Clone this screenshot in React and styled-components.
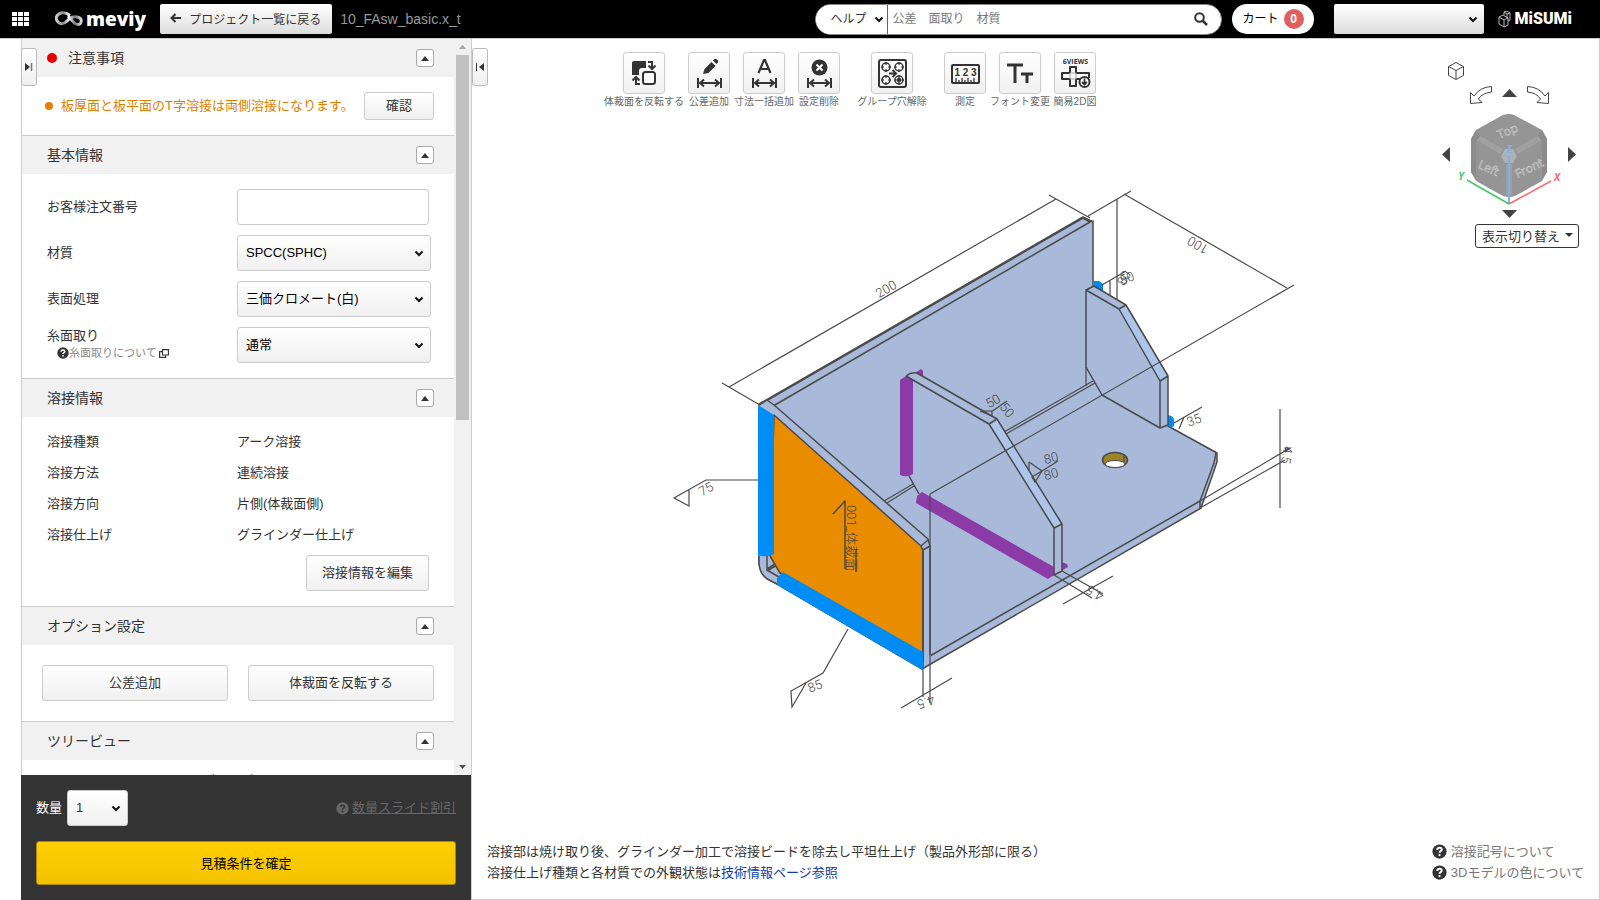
import styled, { createGlobalStyle, css } from 'styled-components';

const GlobalStyle = createGlobalStyle`
  * {
    box-sizing: border-box;
  }

  body {
    margin: 0;
    background: #fff;
    color: #333;
    font-family: 'Liberation Sans', 'Noto Sans CJK JP', sans-serif;
    font-size: 13px;
    line-height: 20px;
  }

  button,
  input,
  select {
    font-family: inherit;
    font-size: 13px;
    color: #333;
  }

  button {
    cursor: pointer;
  }

  a {
    color: inherit;
    text-decoration: none;
  }

  svg {
    display: block;
  }
`;

const raised = css`
  border: 1px solid #ccc;
  border-radius: 3px;
  background: linear-gradient(#fff, #f0f0f0);
`;

const chevron = `url("data:image/svg+xml,%3Csvg xmlns='http://www.w3.org/2000/svg' width='10' height='7'%3E%3Cpath d='M1.500 1.500L5 5l3.500-3.500' fill='none' stroke='%23111' stroke-width='2'/%3E%3C/svg%3E")`;

const Select = styled.select`
  appearance: none;
  height: 36px;
  padding: 0 20px 0 8px;
  border: 1px solid #ccc;
  border-radius: 3px;
  background: ${chevron} no-repeat right 6px center, linear-gradient(#fff, #f0f0f0);
`;

const Page = styled.div`
  display: flex;
  flex-direction: column;
  height: 100vh;
  overflow: hidden;
`;

/* header */

const TopBar = styled.header`
  display: flex;
  align-items: center;
  flex: none;
  height: 39px;
  padding: 0 28px 0 12px;
  background: #000;
  border-bottom: 1px solid #ccc;
  font-size: 12px;
`;

const IconButton = styled.button`
  display: block;
  padding: 0;
  border: 0;
  background: none;
`;

const Brand = styled.a`
  display: flex;
  align-items: center;
  gap: 3px;
  margin: 0 14px 0 26px;
  color: #fff;
  font: 800 19px/28px 'Open Sans', sans-serif;
`;

const BackButton = styled.button`
  display: flex;
  align-items: center;
  gap: 8px;
  height: 30px;
  padding: 0 11px 2px 10px;
  border: 0;
  border-radius: 2px;
  background: linear-gradient(#fff, #ddd);
  font-size: 12px;
  white-space: nowrap;
`;

const FileName = styled.span`
  margin-left: 8px;
  color: #999;
  font-size: 14px;
`;

const Search = styled.form`
  display: flex;
  align-items: center;
  width: 407px;
  height: 31px;
  margin-left: auto;
  padding-right: 13px;
  border: 1px solid #888;
  border-radius: 16px;
  background: #fff;
  overflow: hidden;

  input {
    flex: 1;
    min-width: 0;
    padding: 0 4px;
    border: 0;
    outline: 0;
    font-size: 12px;
  }

  input::placeholder {
    color: #777;
  }
`;

const ScopeSelect = styled(Select)`
  width: 72px;
  height: 31px;
  padding: 0 0 0 14px;
  border-width: 0 1px 0 0;
  border-color: #666;
  border-radius: 0;
  background: ${chevron} no-repeat right 3px center #fff;
  font-size: 12px;
`;

const Cart = styled.a`
  display: flex;
  align-items: center;
  gap: 5px;
  height: 30px;
  margin: 0 20px 0 10px;
  padding: 0 10px;
  border-radius: 15px;
  background: #fff;
  color: #000;
`;

const Badge = styled.span`
  width: 20px;
  height: 20px;
  border-radius: 10px;
  background: #e06060;
  color: #fff;
  font-weight: bold;
  text-align: center;
`;

const AccountSelect = styled(Select)`
  width: 150px;
  height: 30px;
  border: 0;
  border-radius: 2px;
  background: ${chevron} no-repeat right 6px center, linear-gradient(#fff, #ddd);
`;

const Misumi = styled.a`
  display: flex;
  align-items: center;
  gap: 4px;
  margin-left: 14px;
  color: #fff;
  font: 900 16px/28px Roboto, sans-serif;
`;

/* side panel */

const Body = styled.div`
  display: flex;
  flex: 1;
  min-height: 0;
  padding-left: 21px;
`;

const Side = styled.aside`
  position: relative;
  display: flex;
  flex-direction: column;
  flex: none;
  width: 451px;
  border-right: 1px solid #ccc;
`;

const PanelTab = styled.button`
  position: absolute;
  top: 9px;
  left: ${(props) => (props.$outside ? '451px' : '0')};
  z-index: 2;
  width: 16px;
  height: 38px;
  padding: 0;
  display: grid;
  place-items: center;
  ${raised}
  border-color: #bbb;
`;

const Scroll = styled.div`
  display: flex;
  flex: 1;
  min-height: 0;
`;

const Sections = styled.div`
  flex: 1;
  min-width: 0;
  overflow: hidden;
  border-left: 1px solid #ccc;
`;

const ScrollTrack = styled.div`
  display: flex;
  flex-direction: column;
  align-items: center;
  width: 17px;
  padding-right: 1px;
  background: #f1f1f1;

  svg {
    flex: none;
    margin: 6px 0;
  }
`;

const ScrollThumb = styled.div`
  width: 13px;
  height: 365px;
  margin-bottom: auto;
  background: #c1c1c1;
`;

const Section = styled.section`
  & + & {
    border-top: 1px solid #ccc;
  }
`;

const SectionHead = styled.div`
  display: flex;
  align-items: center;
  height: 38px;
  padding: 0 20px 0 25px;
  background: #f1f1f1;

  h2 {
    display: flex;
    align-items: center;
    gap: 11px;
    flex: 1;
    margin: 0;
    font-size: 14px;
    font-weight: normal;
  }
`;

const Dot = styled.i`
  flex: none;
  width: ${(props) => props.$size}px;
  height: ${(props) => props.$size}px;
  border-radius: 50%;
  background: ${(props) => props.$color};
`;

const FoldButton = styled.button`
  display: grid;
  place-items: center;
  width: 18px;
  height: 18px;
  padding: 0;
  border: 1px solid #aaa;
  border-radius: 3px;
  background: #fff;
`;

const Button = styled.button`
  height: ${(props) => (props.$small ? '28px' : '36px')};
  padding: 0 15px 3px;
  white-space: nowrap;
  ${raised}
`;

const Notice = styled.div`
  display: flex;
  align-items: center;
  gap: 8px;
  height: 58px;
  padding: 0 20px 0 23px;
  color: #e27f00;

  p {
    flex: 1;
    margin: 0;
    white-space: nowrap;
  }

  button {
    width: 70px;
  }
`;

const Fields = styled.div`
  display: grid;
  gap: 10px;
  padding: 15px 23px 15px 25px;
`;

const Field = styled.div`
  display: grid;
  grid-template-columns: 190px 1fr;
  align-items: center;
  height: 36px;

  input {
    width: 192px;
    height: 36px;
    border: 1px solid #ccc;
    border-radius: 3px;
  }

  select {
    width: 194px;
    padding-bottom: 2px;
    color: #000;
  }
`;

const HelpedLabel = styled.div`
  align-self: start;

  label {
    display: block;
    line-height: 18px;
  }
`;

const FieldHelp = styled.a`
  display: flex;
  align-items: center;
  padding-left: 10px;
  color: #888;
  font-size: 11px;
  line-height: 16px;

  svg:last-child {
    margin-left: 2px;
  }
`;

const WeldInfo = styled.div`
  display: flex;
  flex-direction: column;
  align-items: flex-end;
  gap: 5px;
  padding: 9px 25px 15px;

  dl {
    display: grid;
    grid-template-columns: 190px 1fr;
    align-self: stretch;
    margin: 0;
    line-height: 31px;
  }

  dd {
    margin: 0;
  }
`;

const ButtonPair = styled.div`
  display: grid;
  grid-template-columns: 1fr 1fr;
  gap: 20px;
  padding: 20px;
`;

const Tree = styled.div`
  padding: 11px 25px 11px 128px;
`;

const Confirm = styled.div`
  display: grid;
  gap: 15px;
  padding: 15px;
  background: #333;

  > div {
    display: flex;
    align-items: center;
    gap: 5px;
    color: #fff;
  }

  select {
    width: 61px;
    padding-bottom: 2px;
  }
`;

const DiscountLink = styled.a`
  display: flex;
  align-items: center;
  gap: 3px;
  margin-left: auto;
  color: #666;

  span {
    text-decoration: underline;
  }
`;

const ConfirmButton = styled.button`
  height: 44px;
  padding-bottom: 3px;
  border: 1px solid #a88a10;
  border-radius: 3px;
  background: linear-gradient(#ffcf00, #f2c200);
  color: #000;
`;

/* viewer */

const Viewer = styled.main`
  display: grid;
  flex: 1;
  min-width: 0;
  border-right: 1px solid #ccc;
  border-bottom: 1px solid #ccc;

  > * {
    grid-area: 1 / 1;
  }
`;

const Model = styled.svg`
  width: 100%;
  height: 100%;
  min-height: 0;

  .line {
    fill: none;
    stroke: #4a4a4a;
    stroke-width: 1.5;
    stroke-linejoin: round;
  }

  .thin {
    fill: none;
    stroke: #4a4a4a;
    stroke-width: 1.2;
  }

  text {
    fill: #444;
    font-family: Roboto, 'Noto Sans CJK JP', sans-serif;
    font-size: 13px;
    font-weight: 300;
    text-anchor: middle;
    dominant-baseline: central;
  }
`;

const Overlay = styled.div`
  z-index: 1;
  display: flex;
  flex-direction: column;
  justify-content: space-between;
  min-height: 0;
`;

const Row = styled.div`
  display: flex;
  justify-content: space-between;
  align-items: flex-start;
`;

const Toolbar = styled.div`
  display: flex;
  gap: 1px;
  padding: 13px 0 0 145px;
`;

const Tool = styled.label`
  display: flex;
  flex-direction: column;
  align-items: center;
  width: 54px;
  margin-right: ${(props) => props.$gap || 0}px;
  color: #666;
  font-size: 10px;
  line-height: 16px;
  white-space: nowrap;

  button {
    display: grid;
    place-items: center;
    width: 42px;
    height: 42px;
    padding: 0;
    ${raised}
  }
`;

const ViewNav = styled.div`
  display: flex;
  flex-direction: column;
  width: 137px;
  margin: 23px 20px 0 0;
`;

const NavRow = styled.div`
  display: flex;
  align-items: flex-start;
  justify-content: center;
  gap: ${(props) => props.$gap || 0}px;
  width: 134px;
  margin-bottom: ${(props) => props.$after}px;
`;

const CubeButton = styled(IconButton)`
  width: 18px;
  margin: 0 0 5px 5px;
`;

const TurnUp = styled(IconButton)`
  padding-top: 4px;
`;

const TurnSide = styled(IconButton)`
  padding-top: 35px;
`;

const ViewSwitch = styled.button`
  display: flex;
  align-items: center;
  justify-content: space-between;
  align-self: flex-end;
  width: 104px;
  height: 24px;
  padding: 0 5px 2px 6px;
  border: 1px solid #333;
  border-radius: 3px;
  background: #fff;
  white-space: nowrap;
`;

const Notes = styled.div`
  padding: 0 15px 16px;
  line-height: 21px;

  p {
    margin: 0;
  }

  a {
    color: #0b3ea8;
  }
`;

const HelpLinks = styled.div`
  padding: 0 15px 16px 0;
  color: #777;
  line-height: 21px;

  a {
    display: flex;
    align-items: center;
    gap: 4px;
  }
`;

const HelpIcon = ({ size = 15, fill = '#333', mark = '#fff' }) => (
  <svg width={size} height={size} viewBox='0 0 16 16'>
    <circle cx='8' cy='8' r='7.6' fill={fill} />
    <path d='M5.6 6.3C5.6 4.6 6.7 4 8 4s2.4.8 2.4 2.1C10.4 7.6 8 7.6 8 9.4' fill='none' stroke={mark} strokeWidth='2' />
    <circle cx='8' cy='11.8' r='1.2' fill={mark} />
  </svg>
);

const Triangle = ({ dir = 'up', w = 8, h = 5, color = '#333' }) => {
  const d = {
    up: `M0 ${h}L${w / 2} 0L${w} ${h}z`,
    down: `M0 0L${w / 2} ${h}L${w} 0z`,
    left: `M${w} 0L0 ${h / 2}L${w} ${h}z`,
    right: `M0 0L${w} ${h / 2}L0 ${h}z`,
  }[dir];
  return (
    <svg width={w} height={h}>
      <path d={d} fill={color} />
    </svg>
  );
};

// horizontal dimension arrow shared by three of the tools
const Span = () => (
  <path d='M4 20v10M27 20v10M6 25h19M10 21.500L6 25l4 3.500M21 21.500l4 3.500-4 3.500' fill='none' stroke='#333' strokeWidth='2' />
);

const toolIcons = {
  flip: (
    <>
      <path d='M5 3h12v7h-4q-3 0-3 3v4H3V5q0-2 2-2z' fill='#333' />
      <rect x='14' y='14' width='12' height='12' rx='2.500' fill='#fff' stroke='#333' strokeWidth='2' />
      <path d='M19 4h4v6M19.500 7.500L23 11l3.500-3.500M11 26H7v-6M3.500 22.500L7 19l3.500 3.500' fill='none' stroke='#333' strokeWidth='2' />
    </>
  ),
  pencil: (
    <>
      <path d='M9 16l1.500-5 7-7 4 4-7 7zM19 2.500l1.500-1.500q1.500-.5 2.800.7t.7 2.800L22.500 6z' fill='#333' />
      <Span />
    </>
  ),
  all: (
    <>
      <path d='M9.500 15L15 2h1l5.500 13M11.500 11h8' fill='none' stroke='#333' strokeWidth='2.200' />
      <Span />
    </>
  ),
  remove: (
    <>
      <circle cx='15.500' cy='9.500' r='8' fill='#333' />
      <path d='M12.500 6.500l6 6M18.500 6.500l-6 6' stroke='#fff' strokeWidth='2' />
      <Span />
    </>
  ),
  holes: (
    <>
      <rect x='2' y='2' width='27' height='27' rx='2' fill='none' stroke='#333' strokeWidth='2' />
      {[[9, 9], [22, 9], [9, 22], [22, 22]].map(([x, y]) => (
        <g key={`${x}-${y}`} fill='none' stroke='#333'>
          <circle cx={x} cy={y} r='4' strokeWidth='1.500' />
          <path d={`M${x - 5} ${y}h3M${x + 2} ${y}h3M${x} ${y - 5}v3M${x} ${y + 2}v3`} strokeWidth='1.200' />
        </g>
      ))}
      <circle cx='22' cy='22' r='2.200' fill='#333' />
      <path d='M12 15.500h6M15.500 12l3.500 3.500-3.500 3.500' fill='none' stroke='#333' strokeWidth='2' />
    </>
  ),
  ruler: (
    <>
      <rect x='2' y='7' width='27' height='18' rx='1' fill='none' stroke='#333' strokeWidth='2' />
      <path d='M6 24v-4M9 24v-2M12 24v-4M15 24v-2M18 24v-4M21 24v-2M24 24v-4' stroke='#333' strokeWidth='1.300' />
      <text x='15.500' y='18' fontSize='10' fontWeight='bold' textAnchor='middle' fill='#333'>1 2 3</text>
    </>
  ),
  font: <path d='M2 7h16M10 7v18M16 16h12M22 16v9' fill='none' stroke='#333' strokeWidth='3' />,
  views: (
    <>
      <text x='15.500' y='6' fontSize='7' fontWeight='bold' textAnchor='middle' fill='#333' fontFamily='Open Sans'>6VIEWS</text>
      <path d='M10 15V9h6v6h13v5M10 15H2v6h8v7h6v-7h4' fill='none' stroke='#333' strokeWidth='2' strokeLinejoin='round' />
      <path d='M10 15h6v6h-6z' fill='none' stroke='#aaa' />
      <circle cx='24.500' cy='24' r='5' fill='#fff' stroke='#333' strokeWidth='2' />
      <path d='M24.500 20.500v5M22 24l2.500 2.500L27 24' fill='none' stroke='#333' strokeWidth='1.800' />
    </>
  ),
};

const tools = [
  { icon: 'flip', label: '体裁面を反転する', gap: 10 },
  { icon: 'pencil', label: '公差追加' },
  { icon: 'all', label: '寸法一括追加' },
  { icon: 'remove', label: '設定削除', gap: 18 },
  { icon: 'holes', label: 'グループ穴解除', gap: 18 },
  { icon: 'ruler', label: '測定' },
  { icon: 'font', label: 'フォント変更' },
  { icon: 'views', label: '簡易2D図' },
];

const weldRows = [
  ['溶接種類', 'アーク溶接'],
  ['溶接方法', '連続溶接'],
  ['溶接方向', '片側(体裁面側)'],
  ['溶接仕上げ', 'グラインダー仕上げ'],
];

// x, y, rotation, text
const dimensions = [
  [886, 289, -30, '200'],
  [1198, 245, 210, '100'],
  [1124, 278, -60, '80'],
  [1127, 278, -20, '50'],
  [1194, 420, -20, '35'],
  [1287, 455, 100, '4.5'],
  [1095, 593, 210, '4.5'],
  [993, 401, -30, '50'],
  [1007, 410, 50, '50'],
  [1051, 458, -15, '80'],
  [1051, 474, -15, '80'],
  [706, 489, -30, '75'],
  [815, 686, -20, '85'],
  [926, 702, 160, '4.5'],
];

const Bracket = () => (
  <Model viewBox='472 39 1127 860' preserveAspectRatio='xMinYMin meet' role='img' aria-label='10_FAsw_basic'>
    {/* back plate and base */}
    <path className='line' style={{ fill: '#a8b9d9' }} d='M759 405L1083 218L1093 221V287L1168 426L1217 453V462L1201 508L922 669L777 584L767 578Q759 572 759 560z' />
    <path d='M1083 217l8-1 2 5z' fill='#fff' />
    <path className='line' d='M759 404L1083 217L1093 222M768 409L1090 222L1083 218' />
    <path className='line' d='M923 660L1200 501L1214 463L1216 453M1200 501v7' />
    <path className='thin' d='M884 501L913 484M887 503L914 486M1004 432L1093 381M1006 434L1095 383M1086 367v19' />

    {/* hole */}
    <ellipse cx='1115' cy='460' rx='12.500' ry='7.500' fill='#9c8526' stroke='#4a4a4a' strokeWidth='1.500' />
    <ellipse cx='1115' cy='464' rx='10' ry='3.500' fill='#fff' stroke='#4a4a4a' />
    <path className='thin' d='M1124 454v8' />

    {/* right rib */}
    <path d='M1094 281h5q4 2 4 5v6l-9-5zM1168 415q6 1 6 5v6l-3 2-3-3z' fill='#008cf5' />
    <path d='M1086 290L1094 286L1126 305L1168 376V425L1160 428L1102 395L1086 367z' fill='#a8b9d9' />
    <path d='M1119 309L1126 305L1168 376L1160 381z' fill='#adc5ea' />
    <path className='line' d='M1086 290L1094 286L1126 305L1168 376V425L1160 428L1102 395L1086 367zL1119 309L1160 381V428M1119 309L1126 305M1160 381L1168 376' />

    {/* middle rib */}
    <path d='M915 373l6-4 2 2v7zM1061 562l6 2 1 3-7 4z' fill='#8c3aa5' />
    <path d='M906 376L914 372L997 419L1062 524V571L1054 575L919 494L909 476z' fill='#a8b9d9' />
    <path d='M989 424L997 419L1062 524L1054 528z' fill='#adc5ea' />
    <path d='M900 380L906 376L913 380V474Q907 478 900 475zM916 503L917 496L922 492L1054 567V575L1048 579z' fill='#8c3aa5' />
    <path className='line' d='M906 376Q911 372 917 373L997 419L1062 524V571L1054 575V528L989 424L906 376M989 424L997 419M1054 528L1062 524M909 476L919 494' />

    {/* front plate */}
    <path d='M759 405L767 400L774 405L928 539L931 545V660L922 669L777 584L767 578Q759 572 759 560z' fill='#a8b9d9' />
    <path className='line' d='M759 556V564Q760 574 767 579L777 584M767 556V570L779 577M767 569L775 564M767 571L777 565' />
    <path className='line' style={{ fill: '#ea8c00' }} d='M774 415L921 546L923 551V662L780 573L770 556z' />
    <path className='line' d='M759 405L767 400L774 405L928 539L930 546L923 550M921 546L928 540M923 551V669M930 546V655' />
    <path d='M758 405L774 415V554Q766 558 758 555zM777 585V578L783 572L923 652V669L921 669z' fill='#008cf5' />

    {/* face mark */}
    <path className='line' d='M845 569V501L833 514M856 550v22' />
    <text transform='translate(851 538) rotate(90)'>001_体裁面</text>

    {/* dimension and leader lines */}
    <path className='thin' d='M729 387L1056 199M722 383L760 405M1049 195L1090 218M1088 216L1131 191M1124 194L1287 288M1117 199V299' />
    <path className='thin' d='M930 494L1294 285M930 494V703M923 669V697M901 708L952 678' />
    <path className='thin' d='M1200 501L1290 448M1200 508L1285 460M1280 409V508M1285 448l5 0-4 3z' />
    <path className='thin' d='M1054 575L1092 598M1062 571L1103 594M1063 604L1113 576' />
    <path className='thin' d='M1102 285L1126 271M1110 281V296M1174 423L1202 407M1184 417L1179 429' />
    <path className='thin' d='M991 412L1007 401M980 411H992V416zM1042 471L1058 461M1029 462L1042 471L1035 482L1032 477L1042 471M1029 462v8' />
    <path className='thin' d='M758 480H706L674 498L689 506V490M848 629L823 673L791 691L792 707L806 683' />
    {dimensions.map(([x, y, angle, text]) => (
      <text key={`${x}-${y}`} transform={`translate(${x} ${y}) rotate(${angle})`}>{text}</text>
    ))}
  </Model>
);

const ViewCube = () => (
  <svg width='106' height='94' viewBox='1456 112 106 94' fontFamily='Open Sans, sans-serif'>
    <path d='M1503 115Q1509 113 1514 115L1542 130L1547 139V172L1542 181L1515 196Q1509 198 1503 196L1476 181L1471 172V139L1476 130z' fill='#959595' />
    <path d='M1476 140L1480 136L1503 149L1500 154zM1542 140L1538 136L1515 149L1518 154zM1506 164h6v31h-6z' fill='#a0a0a0' />
    <path d='M1471 139l5-9 4 6-4 5v38l-5-7zM1547 139l-5-9-4 6 4 5v38l5-7z' fill='#8c8c8c' />
    <path d='M1505 149h8l4 7-4 7h-8l-4-7z' fill='#b0b0b0' />
    <g fill='#8c8c8c' stroke='#d0d0d0' strokeWidth='.5' fontSize='12' textAnchor='middle'>
      <text transform='translate(1509 135) rotate(-22)'>Top</text>
      <text transform='translate(1487 172) rotate(24)'>Left</text>
      <text transform='translate(1531 172) rotate(-26)'>Front</text>
    </g>
    <path d='M1509 204V156' stroke='#7ab4f0' strokeWidth='2' />
    <path d='M1509 204L1467 180' stroke='#3fcb62' strokeWidth='1.500' />
    <path d='M1509 204L1551 181' stroke='#ff6b6b' strokeWidth='1.500' />
    <g fontSize='10' fontWeight='bold' fontStyle='italic' textAnchor='middle'>
      <text x='1509' y='153' fill='#7ab4f0'>Z</text>
      <text x='1461' y='180' fill='#3fcb62'>Y</text>
      <text x='1557' y='181' fill='#ff6b6b'>X</text>
    </g>
  </svg>
);

const Turn = ({ flip }) => (
  <svg width='24' height='20' viewBox='0 0 24 20'>
    <path
      d='M22.500 1.500v5.500Q13 8 9.500 14l3.500 3.500L1.500 18.500V7.500l3.500 3.500Q11 2 22.500 1.500z'
      transform={flip ? 'matrix(-1 0 0 1 24 0)' : undefined}
      fill='#fff'
      stroke='#444'
    />
  </svg>
);

const Panel = ({ title, alert, children }) => (
  <Section>
    <SectionHead>
      <h2>
        {alert && <Dot $size={10} $color='#e60000' />}
        {title}
      </h2>
      <FoldButton aria-label={`${title}を閉じる`}>
        <Triangle />
      </FoldButton>
    </SectionHead>
    {children}
  </Section>
);

const Header = () => (
  <TopBar>
    <IconButton aria-label='メニュー'>
      <svg width='17' height='15' viewBox='0 0 17 15' fill='#fff'>
        {[0, 5, 10].map((y) => (
          <path key={y} d={`M0 ${y}h5v4H0zM6 ${y}h5v4H6zM12 ${y}h5v4h-5z`} />
        ))}
      </svg>
    </IconButton>
    <Brand href='#'>
      <svg width='28' height='16' viewBox='0 0 28 16' fill='none'>
        <defs>
          <linearGradient id='silver' x2='1'>
            <stop offset='0' stopColor='#ccc' />
            <stop offset='.3' stopColor='#8d8790' />
            <stop offset='.5' stopColor='#fff' />
            <stop offset='.75' stopColor='#77717a' />
            <stop offset='1' stopColor='#ddd' />
          </linearGradient>
        </defs>
        <path d='M15 4.500Q9 0 4 3T3 11Q7 15 12 10T22 6Q27 7 26 11T20 12.500L13 5' stroke='url(#silver)' strokeWidth='3' />
      </svg>
      meviy
    </Brand>
    <BackButton>
      <svg width='11' height='10' viewBox='0 0 11 10'>
        <path d='M11 5H2M5.500 1L1.500 5l4 4' fill='none' stroke='#333' strokeWidth='2' />
      </svg>
      プロジェクト一覧に戻る
    </BackButton>
    <FileName>10_FAsw_basic.x_t</FileName>
    <Search>
      <ScopeSelect aria-label='検索対象'>
        <option>ヘルプ</option>
      </ScopeSelect>
      <input aria-label='検索' placeholder='公差　面取り　材質' />
      <IconButton type='button' aria-label='検索する'>
        <svg width='14' height='14' viewBox='0 0 14 14' fill='none' stroke='#333' strokeWidth='2'>
          <circle cx='5.500' cy='5.500' r='4.300' />
          <path d='M8.500 8.500L13 13' strokeWidth='2.500' />
        </svg>
      </IconButton>
    </Search>
    <Cart href='#'>
      カート
      <Badge>0</Badge>
    </Cart>
    <AccountSelect aria-label='アカウント' />
    <Misumi href='#'>
      <svg width='13' height='17' viewBox='0 0 13 17' fill='none' stroke='#ccc' strokeWidth='.9'>
        <path d='M1 6l5 3v7l-5-3zM6 9l4-2v7l-4 2M1 6l4-2 5 3M6 4V1l3 2v4M9 3l3-1v7l-2 1M6 1l3-1 3 2' />
      </svg>
      MiSUMi
    </Misumi>
  </TopBar>
);

const SidePanel = () => (
  <Side>
    <PanelTab aria-label='左へ'>
      <svg width='8' height='8' viewBox='0 0 8 8'>
        <path d='M0 0l5 4-5 4z' fill='#333' />
        <path d='M6.500 0v8' stroke='#777' strokeWidth='1.500' />
      </svg>
    </PanelTab>
    <PanelTab $outside aria-label='パネルを閉じる'>
      <svg width='8' height='8' viewBox='0 0 8 8'>
        <path d='M8 0L3 4l5 4zM0 0h1v8H0z' fill='#333' />
      </svg>
    </PanelTab>
    <Scroll>
      <Sections>
        <Panel title='注意事項' alert>
          <Notice>
            <Dot $size={8} $color='#e27f00' />
            <p>板厚面と板平面のT字溶接は両側溶接になります。</p>
            <Button $small>確認</Button>
          </Notice>
        </Panel>
        <Panel title='基本情報'>
          <Fields>
            <Field>
              <label htmlFor='order'>お客様注文番号</label>
              <input id='order' />
            </Field>
            <Field>
              <label htmlFor='material'>材質</label>
              <Select id='material'>
                <option>SPCC(SPHC)</option>
              </Select>
            </Field>
            <Field>
              <label htmlFor='surface'>表面処理</label>
              <Select id='surface'>
                <option>三価クロメート(白)</option>
              </Select>
            </Field>
            <Field>
              <HelpedLabel>
                <label htmlFor='chamfer'>糸面取り</label>
                <FieldHelp href='#'>
                  <HelpIcon size={12} />
                  糸面取りについて
                  <svg width='10' height='9' viewBox='0 0 10 9' fill='none' stroke='#333' strokeWidth='1.200'>
                    <path d='M3.500 .6h5.900v5.400H3.500zM3 2.600H.6v5.800h6V6.500' />
                  </svg>
                </FieldHelp>
              </HelpedLabel>
              <Select id='chamfer'>
                <option>通常</option>
              </Select>
            </Field>
          </Fields>
        </Panel>
        <Panel title='溶接情報'>
          <WeldInfo>
            <dl>
              {weldRows.map(([name, value]) => [
                <dt key={name}>{name}</dt>,
                <dd key={value}>{value}</dd>,
              ])}
            </dl>
            <Button>溶接情報を編集</Button>
          </WeldInfo>
        </Panel>
        <Panel title='オプション設定'>
          <ButtonPair>
            <Button>公差追加</Button>
            <Button>体裁面を反転する</Button>
          </ButtonPair>
        </Panel>
        <Panel title='ツリービュー'>
          <Tree>メニューグループ</Tree>
        </Panel>
      </Sections>
      <ScrollTrack>
        <Triangle w={7} h={4} color='#a3a3a3' />
        <ScrollThumb />
        <Triangle dir='down' w={7} h={4} color='#505050' />
      </ScrollTrack>
    </Scroll>
    <Confirm>
      <div>
        <label htmlFor='quantity'>数量</label>
        <Select id='quantity'>
          <option>1</option>
        </Select>
        <DiscountLink href='#'>
          <HelpIcon size={13} fill='#666' mark='#333' />
          <span>数量スライド割引</span>
        </DiscountLink>
      </div>
      <ConfirmButton>見積条件を確定</ConfirmButton>
    </Confirm>
  </Side>
);

const App = () => (
  <Page>
    <GlobalStyle />
    <Header />
    <Body>
      <SidePanel />
      <Viewer>
        <Bracket />
        <Overlay>
          <Row>
            <Toolbar>
              {tools.map(({ icon, label, gap }) => (
                <Tool key={icon} $gap={gap}>
                  <button>
                    <svg width='31' height='31' viewBox='0 0 31 31'>{toolIcons[icon]}</svg>
                  </button>
                  {label}
                </Tool>
              ))}
            </Toolbar>
            <ViewNav>
              <CubeButton aria-label='等角表示'>
                <svg width='18' height='18' viewBox='0 0 18 18' fill='none' stroke='#444'>
                  <path d='M9 .5l7.500 4v9L9 17.500l-7.500-4v-9zM1.500 4.500L9 8.500l7.500-4M9 8.500v9' />
                </svg>
              </CubeButton>
              <NavRow $gap={9} $after={7}>
                <IconButton aria-label='左回転'><Turn /></IconButton>
                <TurnUp aria-label='上'><Triangle w={15} h={8} color='#444' /></TurnUp>
                <IconButton aria-label='右回転'><Turn flip /></IconButton>
              </NavRow>
              <NavRow $gap={6} $after={4}>
                <TurnSide aria-label='左'><Triangle dir='left' w={8} h={15} color='#444' /></TurnSide>
                <ViewCube />
                <TurnSide aria-label='右'><Triangle dir='right' w={8} h={15} color='#444' /></TurnSide>
              </NavRow>
              <NavRow $after={6}>
                <IconButton aria-label='下'><Triangle dir='down' w={15} h={8} color='#444' /></IconButton>
              </NavRow>
              <ViewSwitch>
                表示切り替え
                <Triangle dir='down' w={8} h={4} />
              </ViewSwitch>
            </ViewNav>
          </Row>
          <Row>
            <Notes>
              <p>溶接部は焼け取り後、グラインダー加工で溶接ビードを除去し平坦仕上げ（製品外形部に限る）</p>
              <p>溶接仕上げ種類と各材質での外観状態は<a href='#'>技術情報ページ参照</a></p>
            </Notes>
            <HelpLinks>
              <a href='#'><HelpIcon />溶接記号について</a>
              <a href='#'><HelpIcon />3Dモデルの色について</a>
            </HelpLinks>
          </Row>
        </Overlay>
      </Viewer>
    </Body>
  </Page>
);

export default App;
